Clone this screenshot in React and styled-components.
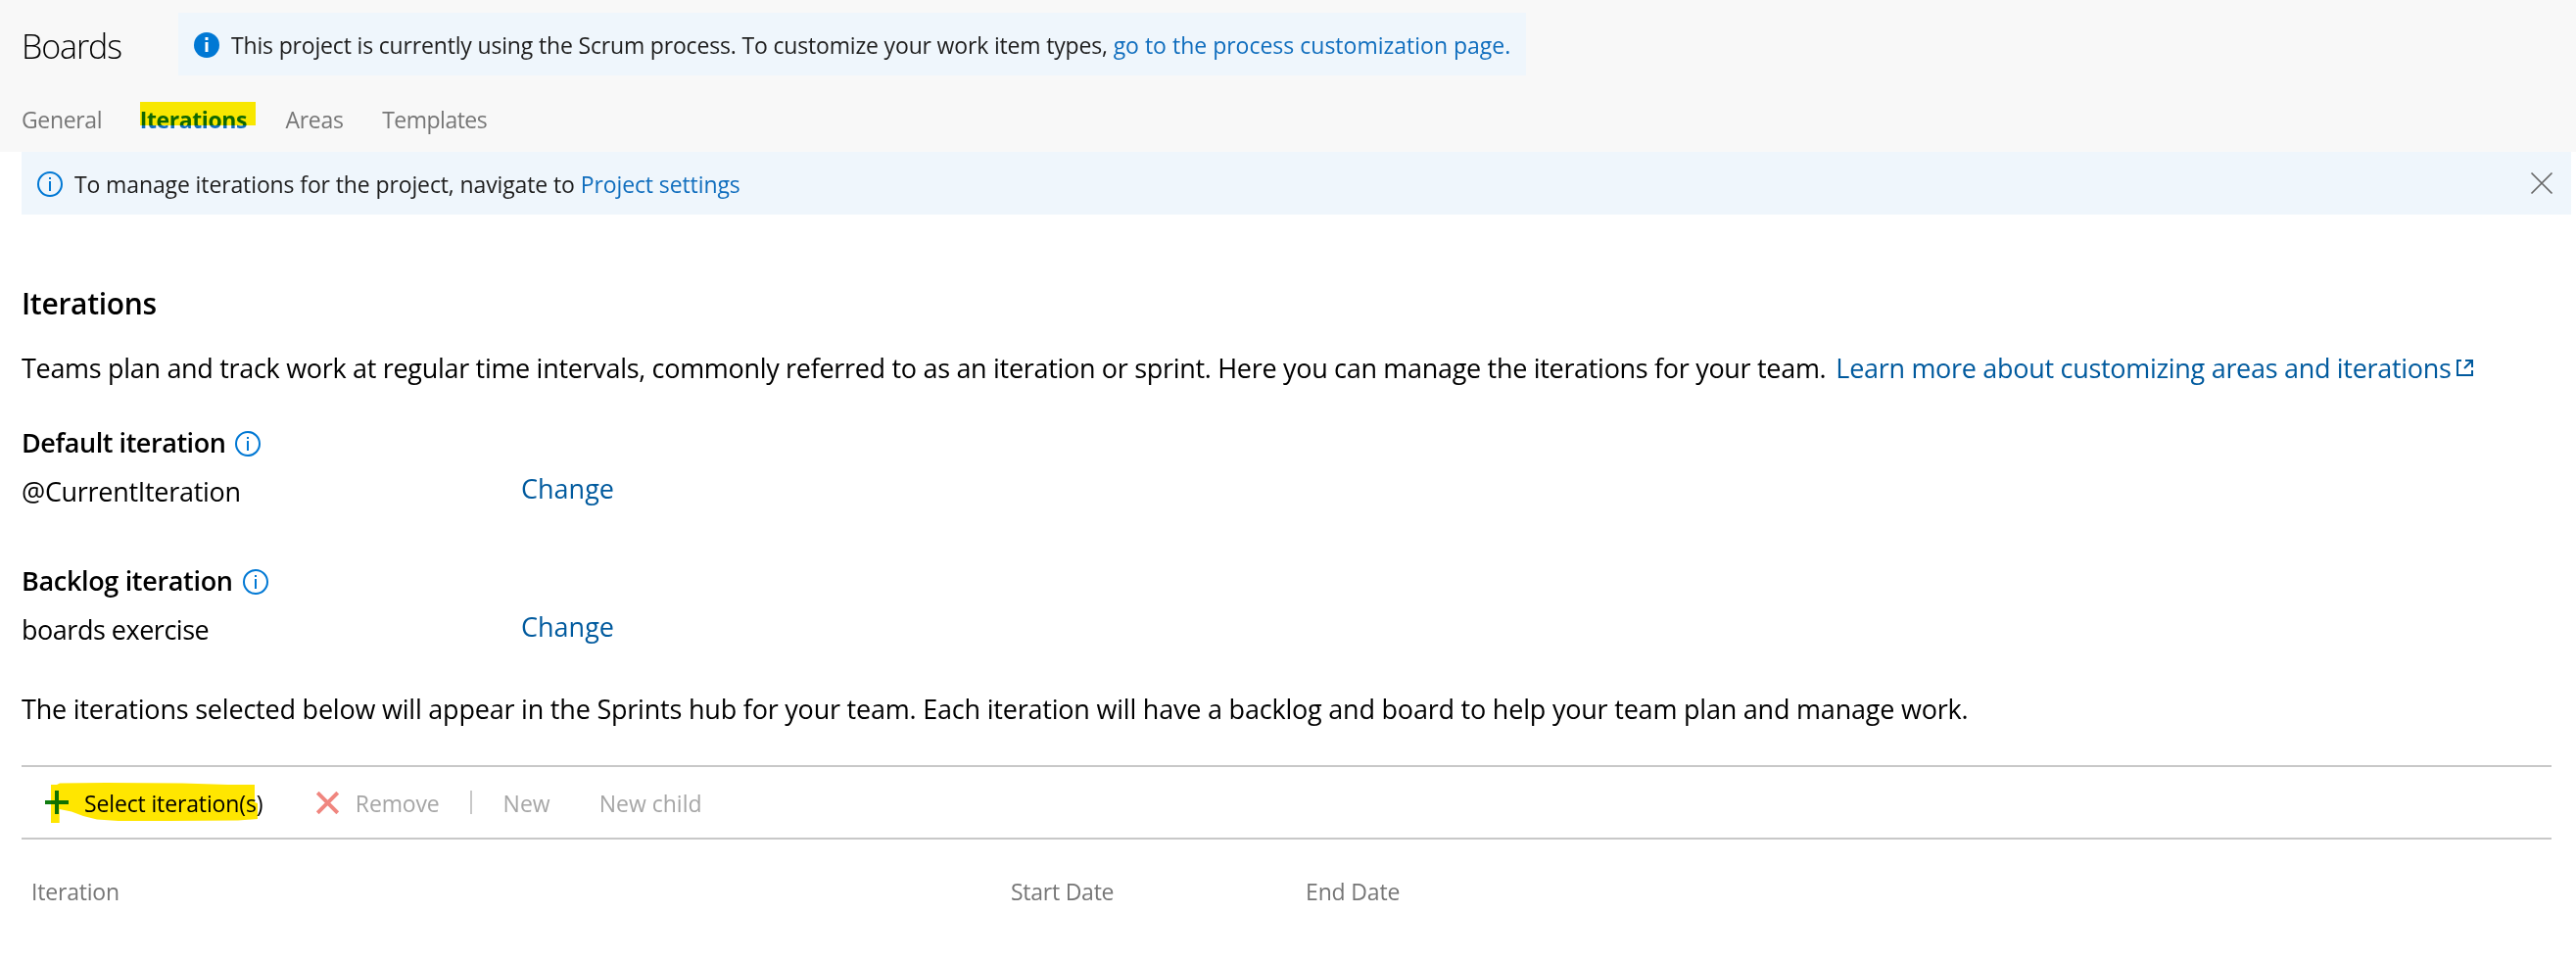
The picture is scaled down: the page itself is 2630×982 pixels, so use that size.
import React from "react";
import styled, { createGlobalStyle } from "styled-components";

const GlobalStyle = createGlobalStyle`
  body {
    margin: 0;
    background: #fff;
    color: #000;
    font-family: "Open Sans", "Noto Sans", sans-serif;
    font-size: 27px;
  }
`;

const Page = styled.div`
  height: 982px;
  overflow: hidden;
`;

const Header = styled.header`
  box-sizing: border-box;
  height: 155px;
  padding: 13px 0 0 22px;
  background: #f8f8f8;
`;

const TitleRow = styled.div`
  display: flex;
  height: 64px;
`;

const Title = styled.h1`
  flex: none;
  width: 160px;
  margin: 0;
  padding-top: 2px;
  font-size: 34px;
  font-weight: 300;
  line-height: 64px;
  letter-spacing: -1.1px;
`;

const Text = styled.span`
  white-space: pre;
  letter-spacing: ${(p) => p.$track || 0}px;
`;

const Link = styled.a`
  white-space: pre;
  color: ${(p) => (p.$dark ? "#005a9e" : "#106ebe")};
  letter-spacing: ${(p) => p.$track || 0}px;
  text-decoration: none;
`;

const Banner = styled.div`
  box-sizing: border-box;
  display: flex;
  flex: none;
  align-items: center;
  width: ${(p) => p.$width}px;
  height: 64px;
  padding: 2px 18px 0 ${(p) => p.$left}px;
  background: #eff6fc;
  color: #1e1e1e;
  font-size: 23px;

  & > svg {
    flex: none;
    margin-right: 12px;
  }
`;

const ProjectBanner = styled(Banner)`
  margin-left: 22px;
`;

const Close = styled.button`
  display: flex;
  margin: 0 0 2px auto;
  padding: 0;
  border: 0;
  background: none;
`;

const Tabs = styled.nav`
  display: flex;
  gap: 39.5px;
  padding-top: 25px;
  font-size: 23px;
  line-height: 40px;
`;

const Tab = styled.a`
  position: relative;
  color: ${(p) => (p.$active ? "#106ebe" : "#767676")};
  font-weight: ${(p) => (p.$active ? 700 : 400)};
  letter-spacing: ${(p) => p.$track}px;
  margin-left: ${(p) => (p.$active ? -1 : 0)}px;
`;

const TabMarker = styled.span`
  position: absolute;
  left: 0;
  top: 2px;
  width: 118px;
  height: 24px;
  background: #ffee00;
  mix-blend-mode: multiply;
`;

const Content = styled.main`
  width: 2583px;
  padding: 71px 0 0 22px;
`;

const Heading = styled.h2`
  margin: 0 0 26px;
  font-size: 30px;
  font-weight: 600;
  line-height: 40px;
  letter-spacing: -0.3px;
`;

const Paragraph = styled.p`
  display: flex;
  align-items: center;
  height: 38px;
  margin: 0 0 ${(p) => p.$gap}px;
  line-height: 37px;

  & > a {
    margin-left: 10px;
  }

  & > svg {
    margin: 0 0 0 5px;
  }
`;

const Setting = styled.section`
  margin-bottom: ${(p) => p.$gap}px;
`;

const SettingLabel = styled.h3`
  display: flex;
  align-items: center;
  gap: 10px;
  margin: 0 0 12px;
  font-size: 27px;
  font-weight: 600;
  line-height: 38px;

  & > svg {
    margin-top: 2px;
  }
`;

const SettingRow = styled.div`
  display: grid;
  grid-template-columns: 510px auto;
  line-height: 38px;
`;

const ChangeCell = styled.div`
  margin-top: -3px;
`;

const Toolbar = styled.div`
  display: flex;
  align-items: center;
  height: 72px;
  padding-left: 24px;
  border: solid #c8c8c8;
  border-width: 2px 0;
  font-size: 23px;
`;

const Command = styled.div`
  position: relative;
  display: flex;
  align-items: center;
  gap: ${(p) => p.$gap || 16}px;
  margin-right: ${(p) => p.$after}px;
  color: ${(p) => (p.$disabled ? "#a6a6a6" : "#000")};
  line-height: 40px;

  & > span {
    margin-top: 2px;
  }
`;

const Separator = styled.div`
  width: 2px;
  height: 24px;
  margin-right: 32px;
  background: #c8c8c8;
`;

const MarkerStroke = styled.svg`
  position: absolute;
  left: 5px;
  top: 0;
  mix-blend-mode: multiply;
`;

const TableHead = styled.div`
  display: grid;
  grid-template-columns: 1000px 301px auto;
  padding: 33px 0 0 10px;
  color: #767676;
  font-size: 23px;
  line-height: 40px;
`;

const InfoFilled = () => (
  <svg width="26" height="26" viewBox="0 0 26 26">
    <circle cx="13" cy="13" r="13" fill="#0078d4" />
    <path d="M11.5 5h3v3h-3zM11.5 10h3V20h-3z" fill="#fff" />
  </svg>
);

const InfoOutline = () => (
  <svg width="26" height="26" viewBox="0 0 26 26">
    <circle cx="13" cy="13" r="12" fill="none" stroke="#0078d4" strokeWidth="2" />
    <path d="M12 6h2v2h-2zM12 10h2v10h-2z" fill="#0078d4" />
  </svg>
);

const CloseIcon = () => (
  <svg width="24" height="24" viewBox="0 0 24 24" fill="none" stroke="#666" strokeWidth="1.7">
    <path d="M1.5 1.5l21 21M22.5 1.5l-21 21" />
  </svg>
);

const ExternalIcon = () => (
  <svg width="17" height="17" viewBox="0 0 17 17" fill="none" stroke="#005a9e" strokeWidth="2">
    <path d="M5 1H1v15h15v-5M9 1h7v7M16 1L8 9" />
  </svg>
);

const PlusIcon = () => (
  <svg width="24" height="24" viewBox="0 0 24 24" stroke="#107c10" strokeWidth="4">
    <path d="M12 0v24M0 12h24" />
  </svg>
);

const RemoveIcon = () => (
  <svg width="23" height="23" viewBox="0 0 23 23" stroke="#f0867f" strokeWidth="4">
    <path d="M1.2 1.2l20.6 20.6M21.8 1.2L1.2 21.8" />
  </svg>
);

export default function App() {
  return (
    <Page>
      <GlobalStyle />
      <Header>
        <TitleRow>
          <Title>Boards</Title>
          <Banner $width={1376} $left={16}>
            <InfoFilled />
            <Text $track={-0.17}>{"This project is currently using the Scrum process. To customize your work item types, "}</Text>
            <Link>go to the process customization page.</Link>
          </Banner>
        </TitleRow>
        <Tabs>
          <Tab $track={-0.35}>General</Tab>
          <Tab $active $track={-0.4}>
            Iterations
            <TabMarker />
          </Tab>
          <Tab $track={-0.3}>Areas</Tab>
          <Tab $track={-0.5}>Templates</Tab>
        </Tabs>
      </Header>
      <ProjectBanner $width={2603} $left={16}>
        <InfoOutline />
        <Text $track={-0.12}>{"To manage iterations for the project, navigate to "}</Text>
        <Link $track={-0.1}>Project settings</Link>
        <Close aria-label="Close">
          <CloseIcon />
        </Close>
      </ProjectBanner>
      <Content>
        <Heading>Iterations</Heading>
        <Paragraph $gap={39}>
          <Text $track={-0.31}>
            Teams plan and track work at regular time intervals, commonly referred to as an iteration or sprint. Here you can manage the iterations for your team.
          </Text>
          <Link $dark $track={-0.3}>Learn more about customizing areas and iterations</Link>
          <ExternalIcon />
        </Paragraph>
        <Setting $gap={53}>
          <SettingLabel>
            <Text $track={-0.45}>Default iteration</Text>
            <InfoOutline />
          </SettingLabel>
          <SettingRow>
            <Text $track={-0.3}>@CurrentIteration</Text>
            <ChangeCell>
              <Link $dark>Change</Link>
            </ChangeCell>
          </SettingRow>
        </Setting>
        <Setting $gap={42}>
          <SettingLabel>
            <Text $track={-0.33}>Backlog iteration</Text>
            <InfoOutline />
          </SettingLabel>
          <SettingRow>
            <Text $track={-0.48}>boards exercise</Text>
            <ChangeCell>
              <Link $dark>Change</Link>
            </ChangeCell>
          </SettingRow>
        </Setting>
        <Paragraph $gap={39}>
          <Text $track={-0.21}>
            The iterations selected below will appear in the Sprints hub for your team. Each iteration will have a backlog and board to help your team plan and manage work.
          </Text>
        </Paragraph>
        <Toolbar>
          <Command $after={54.5}>
            <PlusIcon />
            <Text $track={-0.14}>Select iteration(s)</Text>
            <MarkerStroke width="214" height="42" viewBox="0 0 214 42">
              <path
                d="M1 3h6l3-1.5L57 1l78 .5L182 3h27v18l3 1v16l-20 1.5L120 40H70L48 38.500L34 35 22 30.500 9.700 28V42H1z"
                fill="#ffe600"
              />
            </MarkerStroke>
          </Command>
          <Command $disabled $gap={17} $after={31}>
            <RemoveIcon />
            <Text $track={-0.15}>Remove</Text>
          </Command>
          <Separator />
          <Command $disabled $after={50}>
            <Text>New</Text>
          </Command>
          <Command $disabled $after={0}>
            <Text>New child</Text>
          </Command>
        </Toolbar>
        <TableHead>
          <Text $track={-0.2}>Iteration</Text>
          <Text $track={-0.25}>Start Date</Text>
          <Text $track={-0.15}>End Date</Text>
        </TableHead>
      </Content>
    </Page>
  );
}
